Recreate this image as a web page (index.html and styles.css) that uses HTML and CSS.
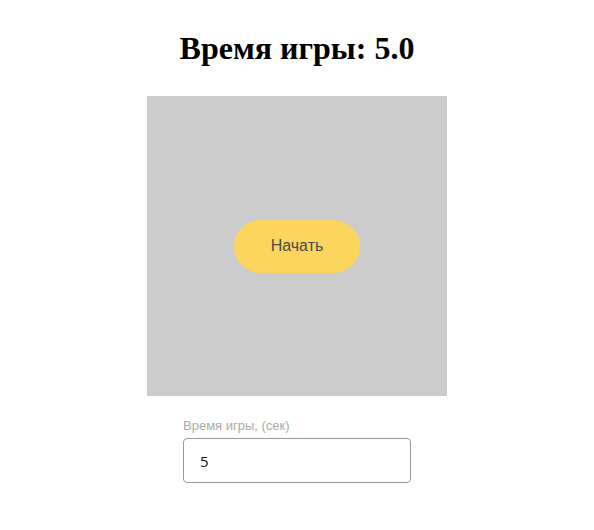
FILE: index.html
```html
<!DOCTYPE html>
<html lang="ru">
<head>
<meta charset="utf-8">
<link rel="stylesheet" href="styles.css">
</head>
<body>
<div class="app">
  <h1 class="title">Время игры: 5.0</h1>
  <div class="game">
    <button class="start">Начать</button>
  </div>
  <div class="field">
    <label class="label" for="time">Время игры, (сек)</label>
    <input class="input" id="time" type="text" value="5">
  </div>
</div>
</body>
</html>
```
FILE: styles.css
```css
html, body {
  margin: 0;
  padding: 0;
  background: #fff;
}
.app {
  display: flex;
  flex-direction: column;
  align-items: center;
  padding-top: 8px;
}
.title {
  font-family: "Liberation Serif", serif;
  font-size: 32px;
  font-weight: bold;
  line-height: 37px;
  margin: 22px 0 29px;
  color: #000;
}
.game {
  width: 300px;
  height: 300px;
  background: #cccccc;
  display: flex;
  align-items: center;
  justify-content: center;
}
.start {
  width: 126px;
  height: 53px;
  border: none;
  border-radius: 27px;
  background: #fcd55f;
  color: #4a4a4a;
  font-family: "Liberation Sans", Arial, sans-serif;
  font-size: 16px;
  padding: 0;
}
.field {
  display: flex;
  flex-direction: column;
  width: 228px;
  margin-top: 22px;
}
.label {
  font-family: "Liberation Sans", Arial, sans-serif;
  font-size: 13px;
  color: #aaaaaa;
  line-height: 15px;
  margin-bottom: 5px;
}
.input {
  box-sizing: border-box;
  width: 228px;
  height: 45px;
  border: 1px solid #999;
  border-radius: 4px;
  padding: 0 16px;
  font-family: "Open Sans", sans-serif;
  font-size: 15px;
  color: #111;
  outline: none;
}
```
